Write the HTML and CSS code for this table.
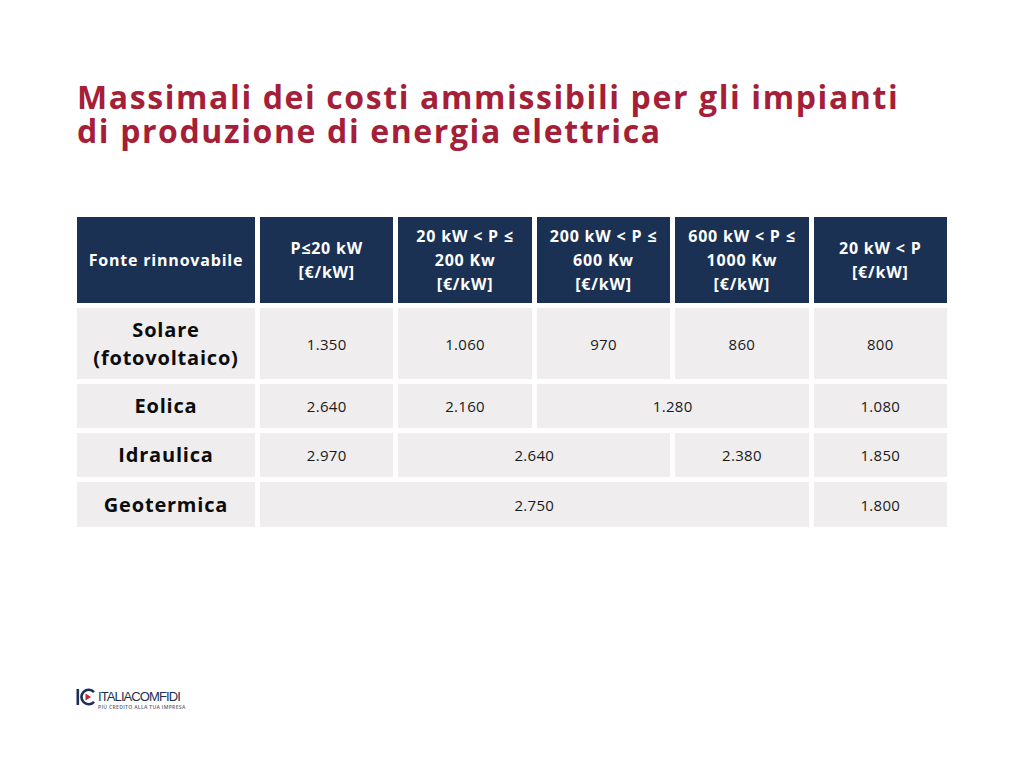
FILE: index.html
```html
<!DOCTYPE html>
<html lang="it">
<head>
<meta charset="utf-8">
<title>Massimali</title>
<link rel="stylesheet" href="styles.css">
</head>
<body>
<div class="page">
  <h1 class="title"><span class="tline">Massimali dei costi ammissibili per gli impianti</span><span class="tline">di produzione di energia elettrica</span></h1>
  <div class="table">
    <div class="th">Fonte rinnovabile</div>
    <div class="th">P≤20 kW<br>[€/kW]</div>
    <div class="th">20 kW &lt; P ≤<br>200 Kw<br>[€/kW]</div>
    <div class="th">200 kW &lt; P ≤<br>600 Kw<br>[€/kW]</div>
    <div class="th">600 kW &lt; P ≤<br>1000 Kw<br>[€/kW]</div>
    <div class="th">20 kW &lt; P<br>[€/kW]</div>

    <div class="td label">Solare<br>(fotovoltaico)</div>
    <div class="td">1.350</div>
    <div class="td">1.060</div>
    <div class="td">970</div>
    <div class="td">860</div>
    <div class="td">800</div>

    <div class="td label">Eolica</div>
    <div class="td">2.640</div>
    <div class="td">2.160</div>
    <div class="td span2">1.280</div>
    <div class="td">1.080</div>

    <div class="td label">Idraulica</div>
    <div class="td">2.970</div>
    <div class="td span2">2.640</div>
    <div class="td">2.380</div>
    <div class="td">1.850</div>

    <div class="td label">Geotermica</div>
    <div class="td span4">2.750</div>
    <div class="td">1.800</div>
  </div>
  <div class="logo">
    <svg class="mark" width="20" height="18" viewBox="0 0 20 18">
      <rect x="0.5" y="1" width="2.6" height="16" fill="#1c2f55"/>
      <path d="M18 4.2 A7.2 7.2 0 1 0 18 13.8" fill="none" stroke="#1c2f55" stroke-width="2.6"/>
      <path d="M9.5 5.6 L15 9 L9.5 12.4 Z" fill="#c8232f"/>
    </svg>
    <div class="brand">
      <div class="name">ITALIACOMFIDI</div>
      <div class="tag">PIÙ CREDITO ALLA TUA IMPRESA</div>
    </div>
  </div>
</div>
</body>
</html>
```

FILE: styles.css
```css
html, body {
  margin: 0;
  padding: 0;
  background: #ffffff;
}
.page {
  width: 1024px;
  height: 768px;
  position: relative;
  box-sizing: border-box;
  padding: 80px 77px 0 77px;
  font-family: "Open Sans", "Liberation Sans", sans-serif;
}
.title {
  margin: 0;
  color: #a51f38;
  font-size: 32px;
  line-height: 34px;
  font-weight: 700;
  letter-spacing: 1.6px;
  white-space: nowrap;
}
.tline {
  display: block;
  height: 34px;
}
.table {
  margin-top: 69px;
  width: 870px;
  display: grid;
  grid-template-columns: 178px repeat(5, 1fr);
  grid-template-rows: 86px 71px 44px 44px 45px;
  gap: 5px;
}
.th {
  background: #1b3153;
  color: #ffffff;
  font-weight: 700;
  font-size: 16px;
  line-height: 24px;
  letter-spacing: 0.8px;
  display: flex;
  align-items: center;
  justify-content: center;
  text-align: center;
  white-space: nowrap;
}
.td {
  background: #efedee;
  color: #1a1a1a;
  font-size: 15px;
  letter-spacing: 0.3px;
  display: flex;
  align-items: center;
  justify-content: center;
  text-align: center;
}
.td.label {
  font-weight: 700;
  font-size: 20px;
  line-height: 28px;
  letter-spacing: 0.8px;
  color: #0c0c0c;
}
.span2 { grid-column: span 2; }
.span4 { grid-column: span 4; }
.logo {
  position: absolute;
  left: 76px;
  top: 688px;
  display: flex;
  align-items: flex-start;
  gap: 2px;
}
.mark { display: block; }
.brand {
  display: flex;
  flex-direction: column;
  color: #1c2f55;
}
.name {
  font-family: "Liberation Sans", sans-serif;
  font-weight: 400;
  font-size: 13px;
  line-height: 15px;
  letter-spacing: -0.9px;
  margin-top: 1px;
}
.tag {
  font-size: 5px;
  line-height: 6px;
  letter-spacing: 0.35px;
  color: #56607a;
  font-weight: 600;
}
```
